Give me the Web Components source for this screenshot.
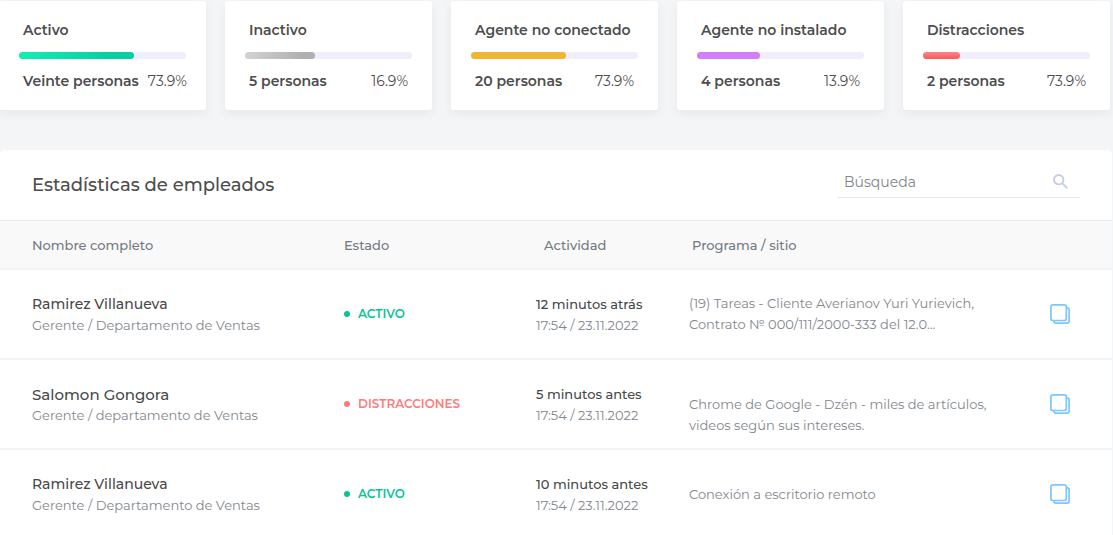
<!DOCTYPE html>
<html lang="es">
<head>
<meta charset="utf-8">
<meta name="viewport" content="width=device-width, initial-scale=1">
<title>Estadísticas de empleados</title>
<style>
  body {
    margin: 0;
    background: #f4f5f7;
    color: #4d4d4d;
    font-family: Montserrat, Inter, "Liberation Sans", sans-serif;
  }
</style>
</head>
<body>
<staff-dashboard></staff-dashboard>

<script>
class StatCard extends HTMLElement {
    constructor() {
        super();
        this.attachShadow({ mode: 'open' });
    }

    connectedCallback() {
        const label = this.getAttribute('label');
        const people = this.getAttribute('people');
        const percent = this.getAttribute('percent');
        const fill = this.getAttribute('fill');
        this.shadowRoot.innerHTML = `
      <style>
        :host {
          display: flex;
          flex-direction: column;
          gap: 12px;
          min-width: 0;
          box-sizing: border-box;
          padding: 19px 20px;
          background: #fff;
          border-radius: 3px;
          box-shadow: 0 4px 10px rgba(60, 70, 90, 0.07);
          font-size: 14px;
          line-height: 20px;
          white-space: nowrap;
        }
        .label, .people { font-weight: 600; }
        .label { padding: 0 4px; }
        .track {
          height: 7px;
          border-radius: 4px;
          background: #f1eefc;
        }
        .fill {
          width: ${fill}%;
          height: 100%;
          border-radius: 4px;
          background: var(--bar);
        }
        .totals {
          display: flex;
          justify-content: space-between;
          gap: 9px;
          padding: 0 4px;
        }
        .percent { font-weight: 400; }
      </style>
      <div class="label" id="label">${label}</div>
      <div class="track" role="progressbar" aria-labelledby="label" aria-valuenow="${fill}">
        <div class="fill"></div>
      </div>
      <div class="totals">
        <span class="people">${people}</span>
        <span class="percent">${percent}</span>
      </div>
    `;
    }
}

class SearchField extends HTMLElement {
    constructor() {
        super();
        this.attachShadow({ mode: 'open' });
        this.shadowRoot.innerHTML = `
      <style>
        :host { display: block; width: 243px; }
        label {
          display: flex;
          align-items: center;
          padding: 0 12px 0 7px;
          border-bottom: 1px solid #e6e8ea;
        }
        input {
          flex: 1;
          min-width: 0;
          height: 30px;
          padding: 0;
          border: 0;
          outline: 0;
          background: none;
          color: #4d4d4d;
          font: inherit;
          font-size: 14px;
        }
        input::placeholder { color: #7f858d; opacity: 1; }
        svg { display: block; }
      </style>
      <label>
        <input type="text" placeholder="Búsqueda" aria-label="Búsqueda">
        <svg width="15" height="15" viewBox="0 0 15 15" fill="none" stroke="#c3cfe2" stroke-width="1.9">
          <circle cx="5.7" cy="5.7" r="4.7"/>
          <path d="M9.2 9.2 L14.3 14.3"/>
        </svg>
      </label>
    `;
    }
}

class StackedText extends HTMLElement {
    constructor() {
        super();
        this.attachShadow({ mode: 'open' });
        this.shadowRoot.innerHTML = `
      <style>
        :host {
          display: block;
          padding-top: 2px;
          line-height: 21px;
          white-space: nowrap;
        }
        .main { color: #484848; font-size: var(--main-size, 13px); font-weight: 500; }
        .note { color: #82878e; font-size: 13px; }
      </style>
      <div class="main"><slot></slot></div>
      <div class="note"><slot name="note"></slot></div>
    `;
    }
}

class StatusLabel extends HTMLElement {
    constructor() {
        super();
        this.attachShadow({ mode: 'open' });
        this.shadowRoot.innerHTML = `
      <style>
        :host {
          display: flex;
          align-items: center;
          gap: 8px;
          color: #06c596;
          font-size: 12px;
          font-weight: 600;
          line-height: 20px;
        }
        :host([type="distracted"]) { color: #fb7d7d; }
        i {
          width: 6px;
          height: 6px;
          border-radius: 50%;
          background: currentColor;
        }
      </style>
      <i></i><slot></slot>
    `;
    }
}

class CopyButton extends HTMLElement {
    constructor() {
        super();
        this.attachShadow({ mode: 'open' });
        this.shadowRoot.innerHTML = `
      <style>
        :host { display: block; }
        button {
          display: block;
          padding: 0;
          border: 0;
          background: none;
          cursor: pointer;
        }
        svg { display: block; }
      </style>
      <button type="button" aria-label="Capturas">
        <svg width="20" height="20" viewBox="0 0 20 20" fill="none" stroke="#7cc8fa" stroke-width="1.7">
          <rect x="0.9" y="0.9" width="15.4" height="15.6" rx="2"/>
          <path d="M16.3 3.9 H17.1 A2 2 0 0 1 19.1 5.9 V17.1 A2 2 0 0 1 17.1 19.1 H5.9 A2 2 0 0 1 3.9 17.1 V16.5"/>
        </svg>
      </button>
    `;
    }
}

class EmployeeTable extends HTMLElement {
    constructor() {
        super();
        this.attachShadow({ mode: 'open' });
        this.shadowRoot.innerHTML = `
      <style>
        :host { display: block; }
        table {
          width: 100%;
          table-layout: fixed;
          border-collapse: separate;
          border-spacing: 0;
        }
        .name { width: 344px; }
        .state { width: 192px; }
        .activity { width: 153px; }
        .action { width: 62px; }
        th, td {
          box-sizing: border-box;
          padding: 0;
          border-bottom: 2px solid #f3f3f4;
          text-align: left;
        }
        th {
          height: 50px;
          border-top: 1px solid #e9edf0;
          background: #f9f9f9;
          color: #747a83;
          font-size: 13px;
          font-weight: 500;
        }
        th:nth-child(3) { padding-left: 8px; }
        th:nth-child(4) { padding-left: 3px; }
        td { height: 90px; }
        th:first-child, td:first-child { padding-left: 32px; }
        td:first-child { --main-size: 14px; }
        td.large { --main-size: 15px; }
        .program {
          color: #82878e;
          font-size: 13px;
          line-height: 21px;
        }
        .program.low { padding-top: 22px; }
      </style>
      <table>
        <colgroup>
          <col class="name"><col class="state"><col class="activity"><col><col class="action">
        </colgroup>
        <thead>
          <tr>
            <th>Nombre completo</th>
            <th>Estado</th>
            <th>Actividad</th>
            <th>Programa / sitio</th>
            <th></th>
          </tr>
        </thead>
        <tbody>
          <tr>
            <td><stacked-text>Ramirez Villanueva<span slot="note">Gerente / Departamento de Ventas</span></stacked-text></td>
            <td><status-label>ACTIVO</status-label></td>
            <td><stacked-text>12 minutos atrás<span slot="note">17:54 / 23.11.2022</span></stacked-text></td>
            <td class="program">(19) Tareas - Cliente Averianov Yuri Yurievich,<br>Contrato № 000/111/2000-333 del 12.0...</td>
            <td><copy-button></copy-button></td>
          </tr>
          <tr>
            <td class="large"><stacked-text>Salomon Gongora<span slot="note">Gerente / departamento de Ventas</span></stacked-text></td>
            <td><status-label type="distracted">DISTRACCIONES</status-label></td>
            <td><stacked-text>5 minutos antes<span slot="note">17:54 / 23.11.2022</span></stacked-text></td>
            <td class="program low">Chrome de Google - Dzén - miles de artículos,<br>videos según sus intereses.</td>
            <td><copy-button></copy-button></td>
          </tr>
          <tr>
            <td><stacked-text>Ramirez Villanueva<span slot="note">Gerente / Departamento de Ventas</span></stacked-text></td>
            <td><status-label>ACTIVO</status-label></td>
            <td><stacked-text>10 minutos antes<span slot="note">17:54 / 23.11.2022</span></stacked-text></td>
            <td class="program">Conexión a escritorio remoto</td>
            <td><copy-button></copy-button></td>
          </tr>
        </tbody>
      </table>
    `;
    }
}

class StaffDashboard extends HTMLElement {
    constructor() {
        super();
        this.attachShadow({ mode: 'open' });
        this.shadowRoot.innerHTML = `
      <style>
        :host { display: block; }
        .cards {
          display: grid;
          grid-template-columns: repeat(5, 1fr);
          gap: 19px;
          padding: 1px 3px 40px 0;
          margin-left: -1px;
        }
        .panel {
          margin-right: 1px;
          overflow: hidden;
          background: #fff;
          border-radius: 5px 5px 0 0;
        }
        header {
          display: flex;
          align-items: center;
          justify-content: space-between;
          height: 70px;
          padding: 0 32px;
        }
        search-field { margin-bottom: 6px; }
        h2 {
          margin: 0;
          font-size: 18px;
          font-weight: 500;
          line-height: 24px;
        }
        .green { --bar: linear-gradient(100deg, #12efb2, #06cfa4 80%); }
        .grey { --bar: linear-gradient(100deg, #d3d3d3, #b0b0b0 80%); }
        .amber { --bar: #f0b531; }
        .violet { --bar: #d37dfb; }
        .red { --bar: linear-gradient(#fb8589, #fd5858); }
      </style>
      <section class="cards">
        <stat-card class="green" label="Activo" people="Veinte personas" percent="73.9%" fill="69"></stat-card>
        <stat-card class="grey" label="Inactivo" people="5 personas" percent="16.9%" fill="42"></stat-card>
        <stat-card class="amber" label="Agente no conectado" people="20 personas" percent="73.9%" fill="57"></stat-card>
        <stat-card class="violet" label="Agente no instalado" people="4 personas" percent="13.9%" fill="38"></stat-card>
        <stat-card class="red" label="Distracciones" people="2 personas" percent="73.9%" fill="22"></stat-card>
      </section>
      <section class="panel">
        <header>
          <h2>Estadísticas de empleados</h2>
          <search-field></search-field>
        </header>
        <employee-table></employee-table>
      </section>
    `;
    }
}

customElements.define('stat-card', StatCard);
customElements.define('search-field', SearchField);
customElements.define('stacked-text', StackedText);
customElements.define('status-label', StatusLabel);
customElements.define('copy-button', CopyButton);
customElements.define('employee-table', EmployeeTable);
customElements.define('staff-dashboard', StaffDashboard);
</script>
</body>
</html>
